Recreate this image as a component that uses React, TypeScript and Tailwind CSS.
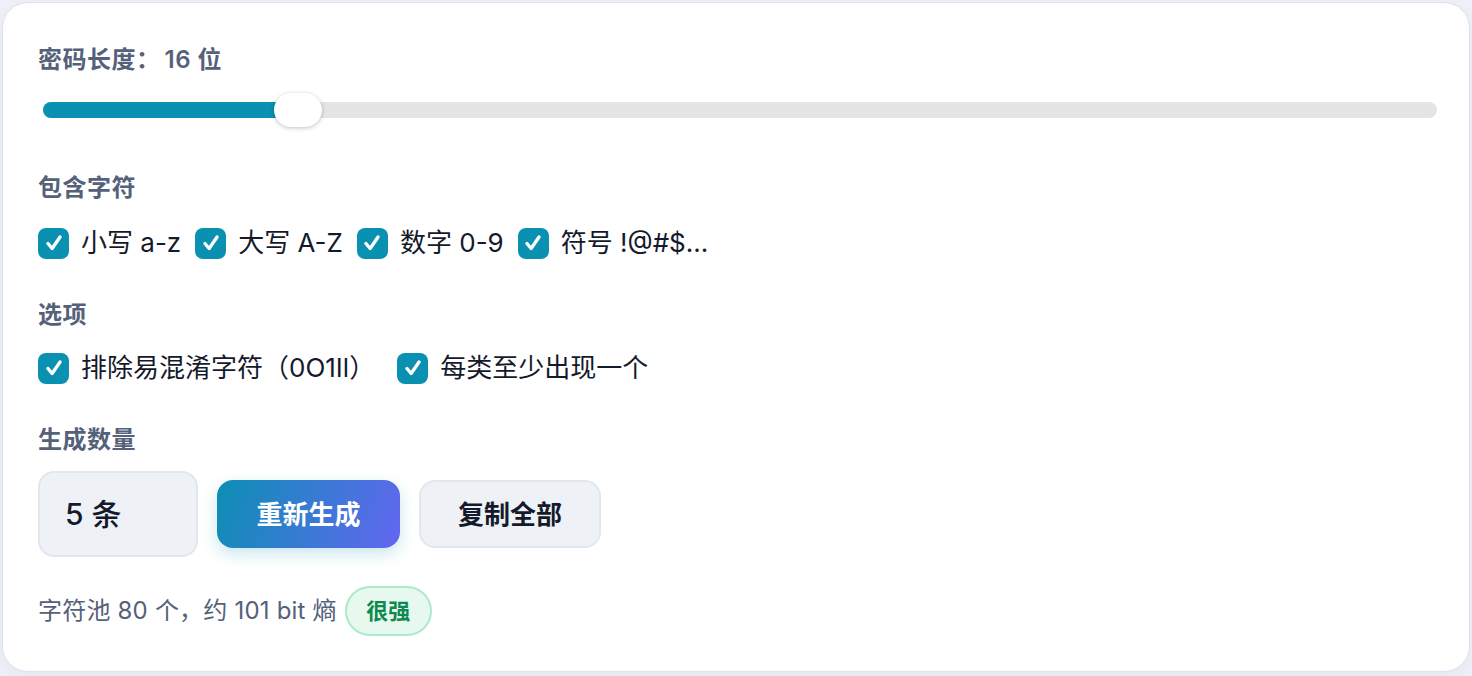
import React from "react";

const FONT = { fontFamily: '"Inter", "Noto Sans CJK SC", sans-serif' };

function Check({ label }: { label: string }) {
  return (
    <div className="flex items-center gap-[12px]">
      <div className="flex h-[31px] w-[31px] items-center justify-center rounded-[8px] bg-[#0a91b1]">
        <svg width="22" height="22" viewBox="0 0 20 20" fill="none">
          <path d="M4.5 10.5 L8.3 15 L15.5 4.5" stroke="white" strokeWidth="3" strokeLinecap="round" strokeLinejoin="round" />
        </svg>
      </div>
      <span className="text-[26px] leading-[32px] text-[#141a2b]">{label}</span>
    </div>
  );
}

export default function App() {
  return (
    <div className="h-[676px] w-[1472px] bg-[#eef1f7] p-[2px]" style={FONT}>
      <div className="flex h-[670px] flex-col rounded-[26px] border border-[#dce2ee] bg-white pl-[35px] pr-[32px] pt-[41px] shadow-[0_4px_16px_rgba(100,116,139,0.08)]">
        <div className="text-[24px] font-semibold leading-[32px] tracking-[0.5px] text-[#556179]">
          密码长度：<span className="ml-[4px]">16 位</span>
        </div>

        <div className="relative mt-[17px] flex h-[34px] items-center pl-[5px]">
          <div className="flex h-[16px] w-full overflow-hidden rounded-full bg-[#e5e5e5]">
            <div className="h-full w-[255px] bg-[#0a91b1]" />
          </div>
          <div className="absolute left-[236px] top-0 h-[34px] w-[48px] rounded-full bg-white shadow-[0_1px_4px_rgba(0,0,0,0.25)]" />
        </div>

        <div className="mt-[45px] text-[24px] font-semibold leading-[32px] tracking-[0.5px] text-[#556179]">包含字符</div>
        <div className="mt-[23px] flex items-center gap-[14px]">
          <Check label="小写 a-z" />
          <Check label="大写 A-Z" />
          <Check label="数字 0-9" />
          <Check label="符号 !@#$..." />
        </div>

        <div className="mt-[40px] text-[24px] font-semibold leading-[32px] tracking-[0.5px] text-[#556179]">选项</div>
        <div className="mt-[21px] flex items-center gap-[22px]">
          <Check label="排除易混淆字符（0O1Il）" />
          <Check label="每类至少出现一个" />
        </div>

        <div className="mt-[40px] text-[24px] font-semibold leading-[32px] tracking-[0.5px] text-[#556179]">生成数量</div>
        <div className="mt-[15px] flex items-center gap-[19px]">
          <div className="flex h-[86px] w-[160px] items-center rounded-[16px] border-2 border-[#e1e6ef] bg-[#eef1f6] pl-[25px] text-[30px] font-medium text-[#141a2b]">
            5 条
          </div>
          <div className="flex h-[68px] w-[183px] items-center justify-center rounded-[16px] bg-[linear-gradient(110deg,#0c8fb3,#6366f1)] text-[26px] font-bold text-white shadow-[0_6px_16px_rgba(14,143,179,0.22)]">
            重新生成
          </div>
          <div className="flex h-[68px] w-[182px] items-center justify-center rounded-[16px] border-2 border-[#e1e6ef] bg-[#eef1f6] text-[26px] font-bold text-[#141a2b]">
            复制全部
          </div>
        </div>

        <div className="mt-[29px] flex items-center gap-[8px]">
          <span className="text-[24px] tracking-[0.2px] text-[#556179]">字符池 80 个，约 101 bit 熵</span>
          <span className="flex h-[50px] w-[87px] items-center justify-center rounded-full border-2 border-[#aee9cc] bg-[#e7f8ef] text-[22px] font-bold text-[#0e8a4f]">
            很强
          </span>
        </div>
      </div>
    </div>
  );
}
